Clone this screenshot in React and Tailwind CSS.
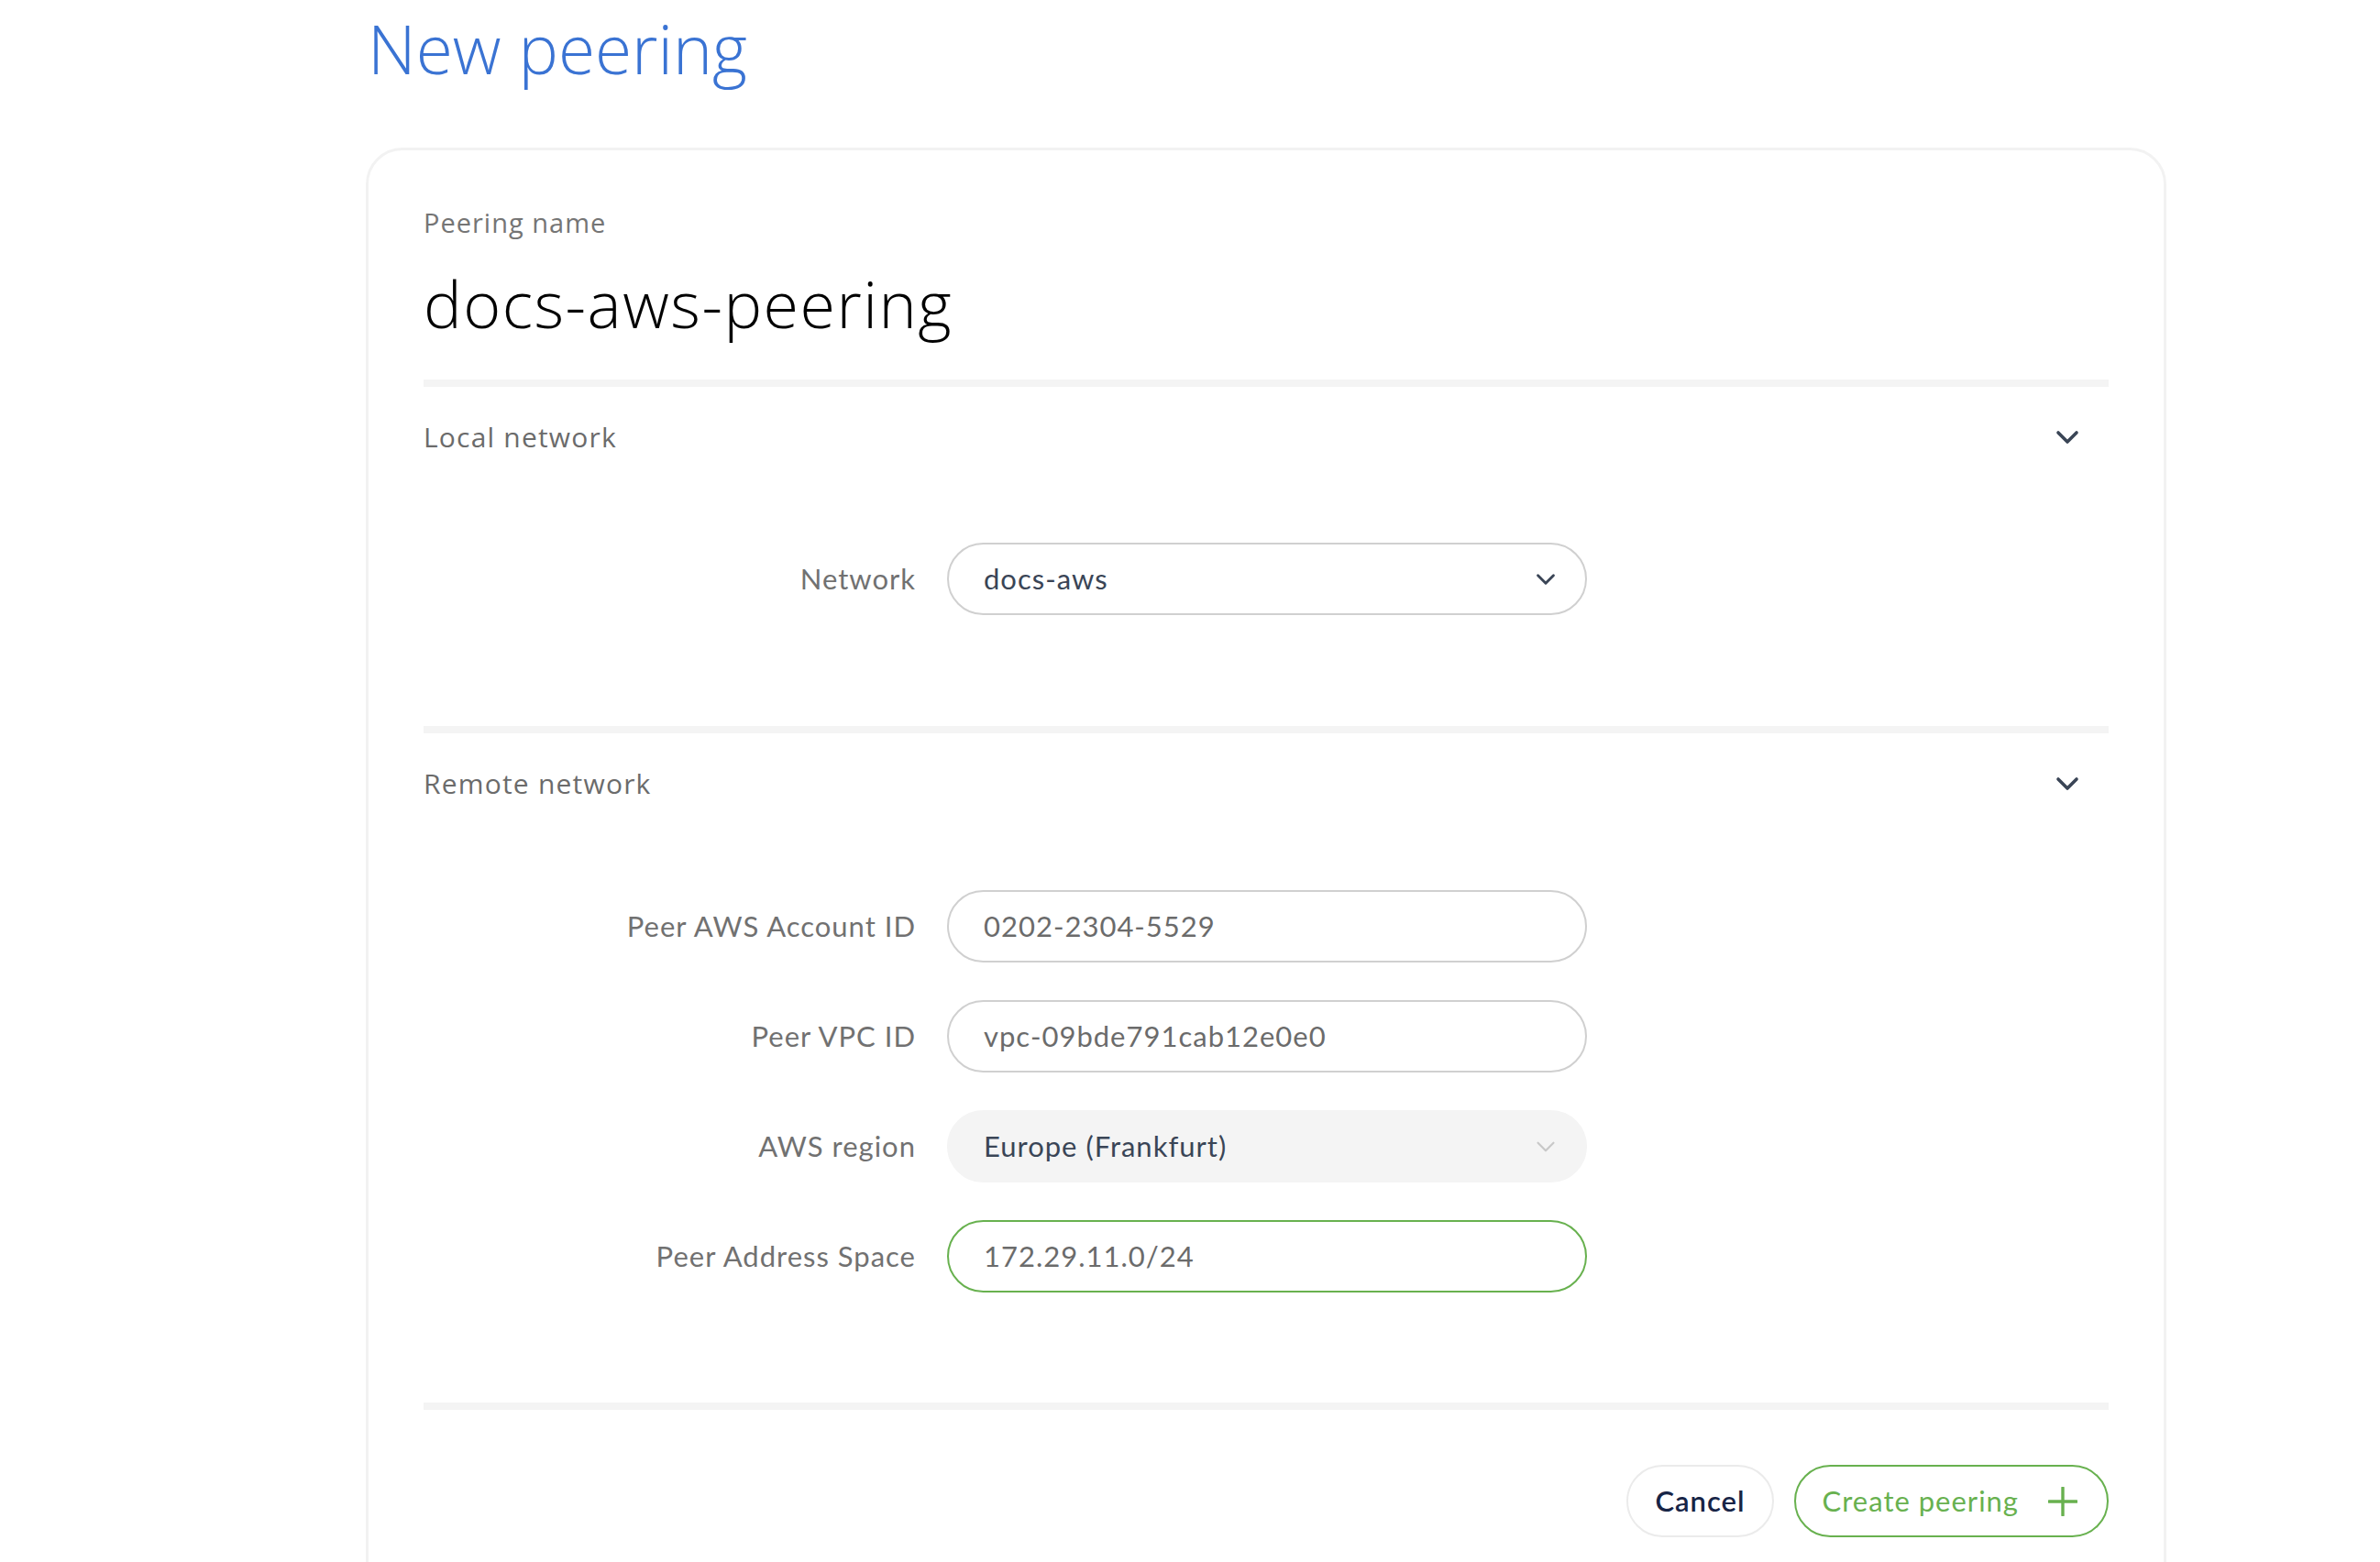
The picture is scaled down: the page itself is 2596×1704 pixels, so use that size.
import React from "react";

const Chevron = ({ className = "", width = 3.6 }) => (
  <svg viewBox="0 0 26 16" className={className} fill="none">
    <path d="M3 3 L13 13 L23 3" stroke="currentColor" strokeWidth={width} strokeLinecap="round" strokeLinejoin="round" />
  </svg>
);

const Plus = () => (
  <svg viewBox="0 0 32 32" className="w-[32px] h-[32px]" fill="none">
    <path d="M16 1 V31 M1 16 H31" stroke="currentColor" strokeWidth="3.4" strokeLinecap="round" />
  </svg>
);

const Divider = () => <div className="h-[8px] bg-[#f4f4f4]" />;

const SectionHeader = ({ title }) => (
  <div className="flex items-center justify-between pr-[32px] mt-[40px]">
    <span className="font-['Open_Sans',sans-serif] text-[30px] leading-[29px] tracking-[1.2px] text-[#6b6b6b]">{title}</span>
    <Chevron className="w-[26px] h-[16px] text-[#3a4556]" />
  </div>
);

const Row = ({ label, children }) => (
  <div className="flex items-center gap-[34px]">
    <span className="w-[537px] text-right font-['Lato',sans-serif] text-[31px] tracking-[1px] text-[#717171]">{label}</span>
    <div className="w-[698px]">{children}</div>
  </div>
);

const TextField = ({ value, green }) => (
  <div
    className={
      "h-[79px] rounded-full border-2 bg-white pl-[38px] flex items-center font-['Lato',sans-serif] text-[31px] tracking-[1px] text-[#6b6b6b] " +
      (green ? "border-[#68b14f]" : "border-[#d0d0d0]")
    }
  >
    {value}
  </div>
);

const SelectField = ({ value, muted }) => (
  <div
    className={
      "h-[79px] rounded-full border-2 pl-[38px] pr-[32px] flex items-center justify-between font-['Lato',sans-serif] text-[31px] tracking-[1px] text-[#3a4556] " +
      (muted ? "bg-[#f4f4f4] border-[#f4f4f4]" : "bg-white border-[#d0d0d0]")
    }
  >
    <span>{value}</span>
    <Chevron className={"w-[22px] h-[14px] " + (muted ? "text-[#c8c8c8]" : "text-[#3a4556]")} width={muted ? 2.6 : 3.4} />
  </div>
);

export default function App() {
  return (
    <div className="min-h-screen bg-white">
      <div className="ml-[399px] w-[1964px]">
        <h1 className="mt-[16px] mb-[72px] pl-[2px] font-['Open_Sans',sans-serif] font-light text-[73px] leading-[73px] text-[#3a73d3]">
          New peering
        </h1>

        <div className="rounded-[40px] border-[3px] border-[#f2f2f2] px-[60px] pt-[64px] pb-[80px]">
          <div className="font-['Open_Sans',sans-serif] text-[29px] leading-[29px] tracking-[1px] text-[#757575]">Peering name</div>
          <div className="mt-[39px] font-['Open_Sans',sans-serif] font-light text-[70px] leading-[70px] tracking-[1.5px] text-black">
            docs-aws-peering
          </div>

          <div className="mt-[48px]">
            <Divider />
          </div>

          <SectionHeader title="Local network" />
          <div className="mt-[101px] mb-[121px]">
            <Row label="Network">
              <SelectField value="docs-aws" />
            </Row>
          </div>

          <Divider />

          <SectionHeader title="Remote network" />
          <div className="mt-[102px] mb-[120px] flex flex-col gap-[41px]">
            <Row label="Peer AWS Account ID">
              <TextField value="0202-2304-5529" />
            </Row>
            <Row label="Peer VPC ID">
              <TextField value="vpc-09bde791cab12e0e0" />
            </Row>
            <Row label="AWS region">
              <SelectField value="Europe (Frankfurt)" muted />
            </Row>
            <Row label="Peer Address Space">
              <TextField value="172.29.11.0/24" green />
            </Row>
          </div>

          <Divider />

          <div className="mt-[60px] flex justify-end gap-[22px] font-['Lato',sans-serif] text-[31px] tracking-[1px]">
            <button className="h-[79px] px-[29px] rounded-full border-2 border-[#ebebeb] bg-white font-semibold text-[#172446]">
              Cancel
            </button>
            <button className="h-[79px] pl-[29px] pr-[32px] rounded-full border-2 border-[#68b14f] bg-white text-[#68b14f] flex items-center gap-[32px]">
              <span>Create peering</span>
              <Plus />
            </button>
          </div>
        </div>
      </div>
    </div>
  );
}
